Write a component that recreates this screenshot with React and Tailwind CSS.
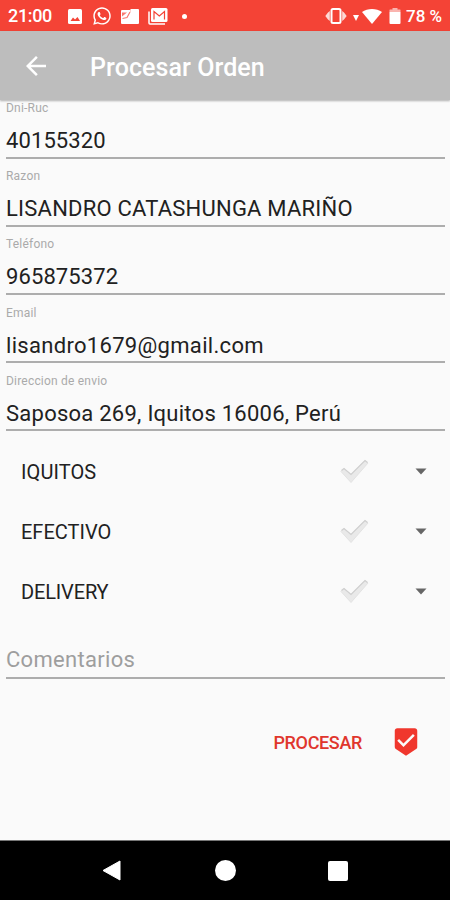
import { FaWhatsapp } from "react-icons/fa";
import { MdArrowBack, MdBeenhere } from "react-icons/md";

const FIELDS = [
  { id: "dni", label: "Dni-Ruc", value: "40155320", spacing: "tracking-[0.1px]" },
  {
    id: "razon",
    label: "Razon",
    value: "LISANDRO CATASHUNGA MARIÑO",
    spacing: "tracking-[0.22px]",
  },
  { id: "telefono", label: "Teléfono", value: "965875372", spacing: "tracking-[0.1px]" },
  {
    id: "email",
    label: "Email",
    value: "lisandro1679@gmail.com",
    spacing: "tracking-[0.31px]",
  },
  {
    id: "direccion",
    label: "Direccion de envio",
    value: "Saposoa 269, Iquitos 16006, Perú",
    spacing: "tracking-[0.25px]",
  },
];

const OPTIONS = [
  { label: "IQUITOS", spacing: "tracking-[0.1px]" },
  { label: "EFECTIVO", spacing: "tracking-[0px]" },
  { label: "DELIVERY", spacing: "tracking-[-0.15px]" },
];

const StatusBar = () => (
  <div className="flex h-[31px] shrink-0 items-center bg-[#f44336] pl-2 pr-2 pt-px text-white">
    <span className="w-[60px] text-[18px] font-medium leading-none tracking-[-0.35px]">21:00</span>
    <svg className="h-[15px] w-[14px]" viewBox="0 0 14 15">
      <rect width="14" height="15" rx="1.5" fill="currentColor" />
      <path d="M2.500 12l2.500-3.500 2 2L9.500 8l2.500 4z" fill="#f44336" />
    </svg>
    <FaWhatsapp className="ml-[10px] h-[20px] w-[20px]" />
    <svg className="ml-[9px] h-[15px] w-[18px]" viewBox="0 0 18 15">
      <path
        d="M1 1h8.500v2H17a1 1 0 0 1 1 1v10a1 1 0 0 1-1 1H1a1 1 0 0 1-1-1V2a1 1 0 0 1 1-1z"
        fill="currentColor"
      />
      <path d="M9.500 0H17a1 1 0 0 1 1 1v3H9.500z" fill="currentColor" />
      <path d="M1 3.500h5L1 7.500z" fill="#f77b71" />
      <path d="M1.500 9.500L6 8.500L9 3" fill="none" stroke="#f77b71" strokeWidth="1.2" />
    </svg>
    <svg className="ml-[9px] h-[17px] w-[20px]" viewBox="0 0 20 17" fill="none">
      <path d="M1 3.500V15a1 1 0 0 0 1 1h15" stroke="currentColor" strokeWidth="1.500" />
      <rect x="3" y="0" width="16.5" height="14" rx="1.500" fill="currentColor" />
      <path d="M6 11.500V3.500l5.300 4.500L16.500 3.500v8" stroke="#f44336" strokeWidth="1.200" />
    </svg>
    <span className="ml-[14px] h-[5px] w-[5px] rounded-full bg-white" />
    <svg className="ml-auto h-[16px] w-[22px]" viewBox="0 0 22 16">
      <rect x="6.500" y="1" width="9" height="14" rx="1.500" fill="none" stroke="currentColor" strokeWidth="2" />
      <path
        d="M4.800 3v10L3 11.500 0.300 8 3 4.500zM17.200 3v10l1.800-1.500L21.700 8 19 4.500z"
        fill="currentColor"
        opacity="0.800"
      />
    </svg>
    <svg className="ml-[6px] mt-[4px] h-[6px] w-[6px]" viewBox="0 0 6 6">
      <path d="M0 0h6L3 6z" fill="currentColor" />
    </svg>
    <svg className="ml-[3px] h-[15px] w-[20px]" viewBox="0 0 20 15">
      <path d="M0 3C5.500-1 14.500-1 20 3L10 15z" fill="currentColor" />
    </svg>
    <svg className="ml-[7px] h-[16px] w-[12px]" viewBox="0 0 12 16">
      <path d="M3.500 0h5v1.500H11a.5.5 0 0 1 .5.5v2H.5V2a.5.5 0 0 1 .5-.5h2.500z" fill="#fab4af" />
      <path d="M.5 4h11v11a1 1 0 0 1-1 1h-9a1 1 0 0 1-1-1z" fill="currentColor" />
    </svg>
    <span className="ml-[5px] w-[36px] whitespace-nowrap text-[17px] font-medium leading-none">
      78 %
    </span>
  </div>
);

const Header = () => (
  <header className="z-10 flex h-[69px] shrink-0 items-center bg-[#bdbdbd] pl-[21px] text-white shadow-[0_1px_2px_rgba(0,0,0,0.3)]">
    <button type="button" aria-label="Atrás">
      <MdArrowBack className="h-[30px] w-[30px]" />
    </button>
    <h1 className="ml-[39px] pt-[3px] text-[25px] font-medium leading-none tracking-[0.08px]">
      Procesar Orden
    </h1>
  </header>
);

const Field = ({ label, value, spacing }) => (
  <div className="flex h-[68.200px] flex-col border-b-2 border-[#adadad] pt-[9.500px]">
    <span className="text-[12px] leading-[16px] tracking-[0.2px] text-[#aaaaaa]">{label}</span>
    <span className={`mt-[10px] whitespace-nowrap text-[22px] leading-[30px] text-[#212121] ${spacing}`}>
      {value}
    </span>
  </div>
);

const CheckMark = () => (
  <svg className="h-[26px] w-[30px]" viewBox="0 0 30 26">
    <path
      d="M2 13.500L5 10.500L12 16.500L26 2.500L29 5L12 24.500z"
      fill="#e9e9e9"
      stroke="#e3e3e3"
      strokeWidth="1"
      strokeLinejoin="round"
    />
    <path d="M2.500 12.500L5 10.500L12 16.500L26 2.500L28.500 4.500" fill="none" stroke="#d0d0d0" strokeWidth="1.2" />
  </svg>
);

const OptionRow = ({ label, spacing }) => (
  <div className="flex h-[60px] items-center pl-[15px] pr-[18px]">
    <span className={`pt-[2px] text-[20px] leading-none text-[#212121] ${spacing}`}>{label}</span>
    <span className="ml-auto">
      <CheckMark />
    </span>
    <svg className="ml-[46px] h-[7px] w-[12px]" viewBox="0 0 12 7">
      <path d="M0.500 0.500h11L6 6.500z" fill="#666" />
    </svg>
  </div>
);

const NavBar = () => (
  <nav className="flex h-[60px] shrink-0 items-center border-t border-[#777] bg-black pl-[102px] text-white">
    <svg className="h-[21px] w-[19px]" viewBox="0 0 19 21">
      <path d="M1 10.500L18 1v19z" fill="currentColor" stroke="currentColor" strokeLinejoin="round" />
    </svg>
    <span className="ml-[94px] h-[21px] w-[21px] rounded-full bg-white" />
    <span className="ml-[92px] h-[20px] w-[20px] rounded-[2px] bg-white" />
  </nav>
);

export default function App() {
  return (
    <div className="flex h-[900px] w-[450px] flex-col overflow-hidden bg-[#fafafa] font-['Roboto',sans-serif]">
      <StatusBar />
      <Header />
      <main className="min-h-0 flex-1 overflow-hidden pl-[6px] pr-[5px]">
        <div className="-mt-[9.500px]">
          {FIELDS.map((field) => (
            <Field key={field.id} label={field.label} value={field.value} spacing={field.spacing} />
          ))}
        </div>
        <div className="mt-[10px]">
          {OPTIONS.map((option) => (
            <OptionRow key={option.label} label={option.label} spacing={option.spacing} />
          ))}
        </div>
        <div className="mt-[22px] flex h-[36px] border-b-2 border-[#adadad]">
          <span className="text-[22px] leading-[34px] tracking-[0.3px] text-[#9e9e9e]">
            Comentarios
          </span>
        </div>
        <div className="mt-[48px] flex items-center justify-end pr-[24px]">
          <button
            type="button"
            className="pt-[2px] text-[18px] font-medium leading-none tracking-[-0.35px] text-[#e0362d]"
          >
            PROCESAR
          </button>
          <MdBeenhere className="ml-[29px] h-[30px] w-[30px] text-[#f0372d]" />
        </div>
      </main>
      <NavBar />
    </div>
  );
}
